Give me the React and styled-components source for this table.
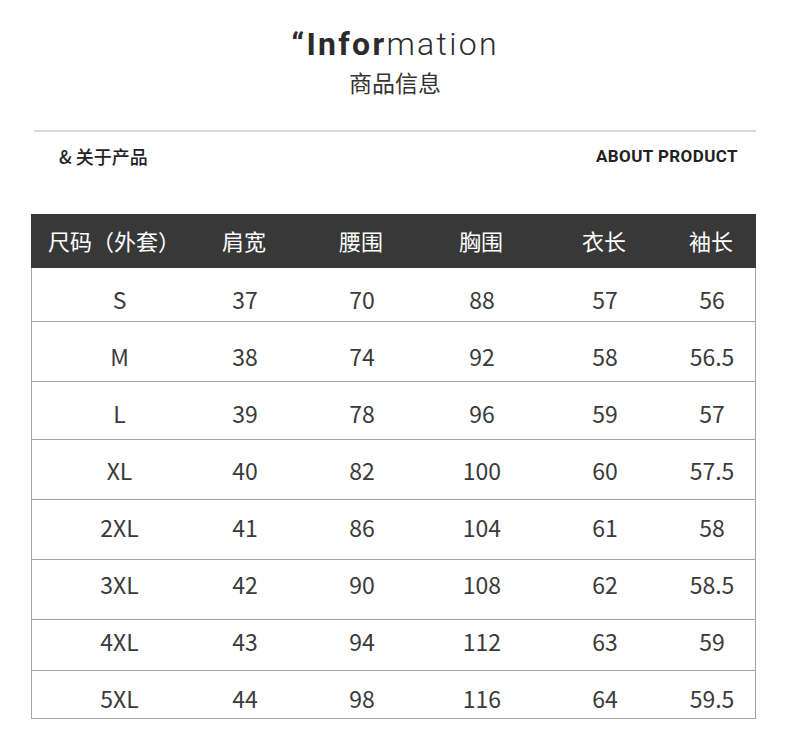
import React from "react";
import styled, { createGlobalStyle } from "styled-components";

const Global = createGlobalStyle`
  html, body { margin: 0; padding: 0; background: #ffffff; }
  body { font-family: "Noto Sans CJK SC", "Noto Sans", sans-serif; }
`;

const Page = styled.div`
  width: 790px;
  height: 736px;
  background: #fff;
  overflow: hidden;
  display: flex;
  flex-direction: column;
  align-items: center;
`;

const TitleBlock = styled.div`
  display: flex;
  flex-direction: column;
  align-items: center;
  padding-top: 24px;
  color: #2b2b2b;
`;

const EnTitle = styled.div`
  font-family: Roboto, "Liberation Sans", sans-serif;
  font-size: 32px;
  line-height: 40px;
  letter-spacing: 2.3px;
`;

const Bold = styled.span`
  font-weight: 700;
`;

const Light = styled.span`
  font-weight: 300;
`;

const CnTitle = styled.div`
  font-family: "Noto Sans CJK SC", sans-serif;
  font-size: 23px;
  line-height: 30px;
  font-weight: 400;
  color: #333;
  margin-top: 3px;
`;

const Divider = styled.div`
  width: 722px;
  height: 2px;
  background: #dadada;
  margin-top: 33px;
`;

const AboutRow = styled.div`
  width: 790px;
  display: flex;
  justify-content: space-between;
  align-items: center;
  box-sizing: border-box;
  padding: 0 52px 0 59px;
  margin-top: 12px;
  height: 24px;
`;

const AboutCn = styled.div`
  font-family: "Noto Sans CJK SC", sans-serif;
  font-size: 18px;
  font-weight: 500;
  color: #222;
`;

const AboutEn = styled.div`
  font-family: Roboto, "Liberation Sans", sans-serif;
  font-size: 17px;
  font-weight: 700;
  letter-spacing: 0.4px;
  color: #222;
`;

const Table = styled.div`
  margin-top: 46px;
  width: 725px;
  align-self: flex-start;
  margin-left: 31px;
  display: flex;
  flex-direction: column;
`;

const cols = "176px 74px 160px 80px 166px 48px 1fr";

const HeadRow = styled.div`
  display: grid;
  grid-template-columns: ${cols};
  height: 54px;
  align-items: center;
  background: #383838;
  color: #fff;
  font-family: "Noto Sans CJK SC", sans-serif;
  font-size: 22px;
`;

const HeadCell = styled.div`
  text-align: center;
  white-space: nowrap;
  padding-right: ${(p) => p.$shift || 0}px;
  margin-top: -2px;
`;

const Body = styled.div`
  border-left: 1px solid #a3a3a3;
  border-right: 1px solid #a3a3a3;
  box-sizing: border-box;
`;

const Row = styled.div`
  display: grid;
  grid-template-columns: ${cols};
  height: ${(p) => p.$h}px;
  border-bottom: 1px solid #a3a3a3;
  box-sizing: border-box;
  font-family: "Noto Sans CJK SC", "Noto Sans", sans-serif;
  font-size: 23px;
  color: #3a3a3a;
`;

const Cell = styled.div`
  text-align: center;
  white-space: nowrap;
  line-height: 30px;
  padding-top: ${(p) => p.$top}px;
  margin-left: ${(p) => (p.$first ? -1 : 0)}px;
`;

const rows = [
  { h: 54, top: 16, v: ["S", "37", "70", "88", "57", "56"] },
  { h: 60, top: 19, v: ["M", "38", "74", "92", "58", "56.5"] },
  { h: 58, top: 16, v: ["L", "39", "78", "96", "59", "57"] },
  { h: 60, top: 15, v: ["XL", "40", "82", "100", "60", "57.5"] },
  { h: 60, top: 12, v: ["2XL", "41", "86", "104", "61", "58"] },
  { h: 60, top: 9, v: ["3XL", "42", "90", "108", "62", "58.5"] },
  { h: 51, top: 6, v: ["4XL", "43", "94", "112", "63", "59"] },
  { h: 48, top: 12, v: ["5XL", "44", "98", "116", "64", "59.5"] },
];

const heads = ["尺码（外套）", "肩宽", "腰围", "胸围", "衣长", "袖长"];

export default function App() {
  return (
    <Page>
      <Global />
      <TitleBlock>
        <EnTitle>
          <Bold>“Infor</Bold>
          <Light>mation</Light>
        </EnTitle>
        <CnTitle>商品信息</CnTitle>
      </TitleBlock>
      <Divider />
      <AboutRow>
        <AboutCn>&amp; 关于产品</AboutCn>
        <AboutEn>ABOUT PRODUCT</AboutEn>
      </AboutRow>
      <Table>
        <HeadRow>
          {heads.map((h, i) => (
            <HeadCell key={h} $shift={i === 0 ? 10 : 0}>
              {h}
            </HeadCell>
          ))}
          <div />
        </HeadRow>
        <Body>
          {rows.map((r) => (
            <Row key={r.v[0]} $h={r.h}>
              {r.v.map((c, i) => (
                <Cell key={i} $top={r.top} $first={i === 0}>
                  {c}
                </Cell>
              ))}
              <div />
            </Row>
          ))}
        </Body>
      </Table>
    </Page>
  );
}
